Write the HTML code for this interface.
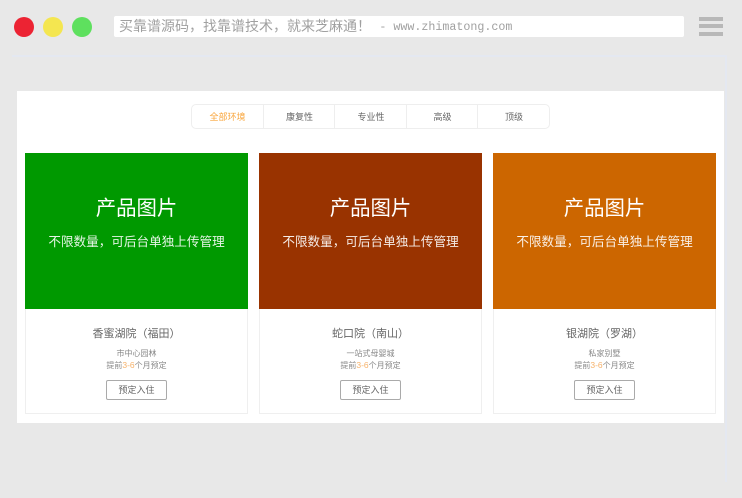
<!DOCTYPE html>
<html lang="zh">
<head>
<meta charset="utf-8">
<style>
html,body{margin:0;padding:0}
body{width:742px;height:498px;background:#e8e8e8;position:relative;overflow:hidden;font-family:"Liberation Sans","Noto Sans CJK SC",sans-serif;color:#555}
.abs,.abs *{box-sizing:border-box}
.abs{position:absolute}
.dot{width:20px;height:20px;border-radius:50%;top:17px}
.bar{left:114px;top:16px;width:570px;height:21px;background:#fff;border-radius:2px;color:#a0a0a0;font:14px/25px "Liberation Mono","WenQuanYi Zen Hei",monospace;padding-left:5px;white-space:pre;overflow:hidden}
.bar .u{font-size:11.67px;position:relative;top:-1px}
.ham{left:699px;width:24px;height:4px;background:#b8b8b8}
.frame{left:12px;top:55px;width:715px;height:427px;border:2px solid #e4e8f1;border-bottom:0;border-left:0}
.topline{left:12px;top:55px;width:715px;height:1px;background:#e4e8f1}
.panel{left:17px;top:91px;width:707px;height:332px;background:#fff}
.tabs{left:191px;top:104px;width:359px;height:25px;border:1px solid #eeeeee;border-radius:5px;background:#fff}
.tab{position:absolute;top:0;height:23px;line-height:24px;font-size:9px;text-align:center;color:#666}
.div{position:absolute;top:0;width:1px;height:23px;background:#eeeeee}
.card{top:153px;width:223px;height:261px;border:1px solid #efefef;background:#fff;text-align:center}
.img{position:absolute;left:-1px;top:-1px;width:223px;height:156px;color:#fff;text-align:center}
.t1{position:absolute;left:0;right:0;top:41px;font-size:20.4px;line-height:30px}
.t2{position:absolute;left:0;right:0;top:79px;font-size:12.6px;line-height:20px;opacity:.9}
.name{position:absolute;left:0;right:0;top:171px;font-size:11px;line-height:18px;color:#666}
.s1{position:absolute;left:0;right:0;top:194px;font-size:8px;line-height:12px;color:#888}
.s2{position:absolute;left:0;right:0;top:205px;font-size:8px;line-height:12px;color:#888}
.s2 b{font-weight:400;color:#f6b26b;font-size:8.5px}
.btn{position:absolute;left:80px;top:226px;width:61px;height:20px;border:1px solid #aaa;border-radius:2px;font-size:9px;line-height:19px;color:#666}
</style>
</head>
<body>
<div class="abs dot" style="left:14px;background:#ec2333"></div>
<div class="abs dot" style="left:43px;background:#f4e650"></div>
<div class="abs dot" style="left:72px;background:#5ee05e"></div>
<div class="abs bar">买靠谱源码，找靠谱技术，就来芝麻通！ <span class="u">- www.zhimatong.com</span></div>
<div class="abs ham" style="top:17px"></div>
<div class="abs ham" style="top:24px"></div>
<div class="abs ham" style="top:32px"></div>
<div class="abs frame"></div>
<div class="abs topline"></div>
<div class="abs panel"></div>
<div class="abs tabs">
  <div class="tab" style="left:0;width:71px;color:#f9a63c">全部环境</div>
  <div class="div" style="left:71px"></div>
  <div class="tab" style="left:72px;width:71px">康复性</div>
  <div class="div" style="left:142px"></div>
  <div class="tab" style="left:143px;width:72px">专业性</div>
  <div class="div" style="left:214px"></div>
  <div class="tab" style="left:215px;width:71px">高级</div>
  <div class="div" style="left:285px"></div>
  <div class="tab" style="left:286px;width:72px">顶级</div>
</div>
<div class="abs card" style="left:25px">
  <div class="img" style="background:#009900"><div class="t1">产品图片</div><div class="t2">不限数量，可后台单独上传管理</div></div>
  <div class="name">香蜜湖院（福田）</div>
  <div class="s1">市中心园林</div>
  <div class="s2">提前<b>3-6</b>个月预定</div>
  <div class="btn">预定入住</div>
</div>
<div class="abs card" style="left:259px">
  <div class="img" style="background:#993300"><div class="t1">产品图片</div><div class="t2">不限数量，可后台单独上传管理</div></div>
  <div class="name">蛇口院（南山）</div>
  <div class="s1">一站式母婴城</div>
  <div class="s2">提前<b>3-6</b>个月预定</div>
  <div class="btn">预定入住</div>
</div>
<div class="abs card" style="left:493px">
  <div class="img" style="background:#cc6600"><div class="t1">产品图片</div><div class="t2">不限数量，可后台单独上传管理</div></div>
  <div class="name">银湖院（罗湖）</div>
  <div class="s1">私家别墅</div>
  <div class="s2">提前<b>3-6</b>个月预定</div>
  <div class="btn">预定入住</div>
</div>
</body>
</html>
